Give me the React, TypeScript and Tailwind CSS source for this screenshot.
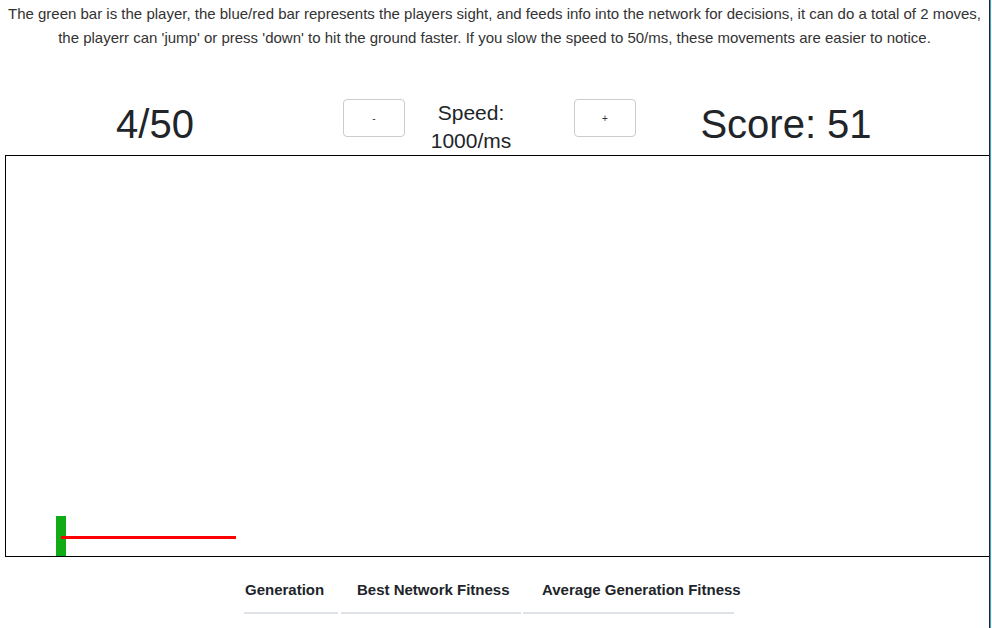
export default function App() {
  return (
    <div className="flex h-[628px] w-[992px] overflow-hidden bg-white font-['Liberation_Sans',Arial,sans-serif] text-[#212529]">
      <div className="min-w-0 flex-1 overflow-hidden">
        <p className="pt-[2px] text-center text-[15px] leading-[24px] text-[#333]">
          The green bar is the player, the blue/red bar represents the players sight, and feeds info into the network for decisions, it can do a total of 2 moves,
          <br />
          the playerr can 'jump' or press 'down' to hit the ground faster. If you slow the speed to 50/ms, these movements are easier to notice.
        </p>

        <div className="mt-[49px] flex items-start">
          <div className="mt-[1px] w-[310px] text-center text-[40px] leading-[48px]">4/50</div>
          <button className="ml-[33px] flex h-[38px] w-[62px] items-center justify-center rounded-[4px] border border-[#ccc] bg-white text-[10px] text-[#333]">
            -
          </button>
          <div className="w-[132px] text-center text-[21px] leading-[28px]">
            Speed:
            <br />
            1000/ms
          </div>
          <button className="ml-[37px] flex h-[38px] w-[62px] items-center justify-center rounded-[4px] border border-[#ccc] bg-white text-[10px] text-[#333]">
            +
          </button>
          <div className="mt-[1px] w-[300px] text-center text-[40px] leading-[48px]">Score: 51</div>
        </div>

        <div className="ml-[5px] h-[402px] w-[1002px] border border-black">
          <svg width="1000" height="400" viewBox="0 0 1000 400">
            <rect x="50" y="360" width="10" height="40" fill="#11ab15" />
            <rect x="55" y="380" width="175" height="3" fill="#ff0000" />
          </svg>
        </div>

        <div className="mt-[23px] flex whitespace-nowrap pl-[244px] text-[15px] font-bold">
          <div className="w-[94px] border-b-2 border-[#dee2e6] pb-[12px] pl-[1px] leading-[20px]">Generation</div>
          <div className="ml-[3px] w-[180px] border-b-2 border-[#dee2e6] pb-[12px] pl-[16px] leading-[20px]">Best Network Fitness</div>
          <div className="ml-[2px] w-[211px] border-b-2 border-[#dee2e6] pb-[12px] pl-[19px] leading-[20px]">Average Generation Fitness</div>
        </div>
      </div>
      <div className="flex w-[3px] shrink-0">
        <div className="w-px bg-[#222]" />
        <div className="w-px bg-[#3aa6c8]" />
        <div className="w-px bg-white" />
      </div>
    </div>
  );
}
